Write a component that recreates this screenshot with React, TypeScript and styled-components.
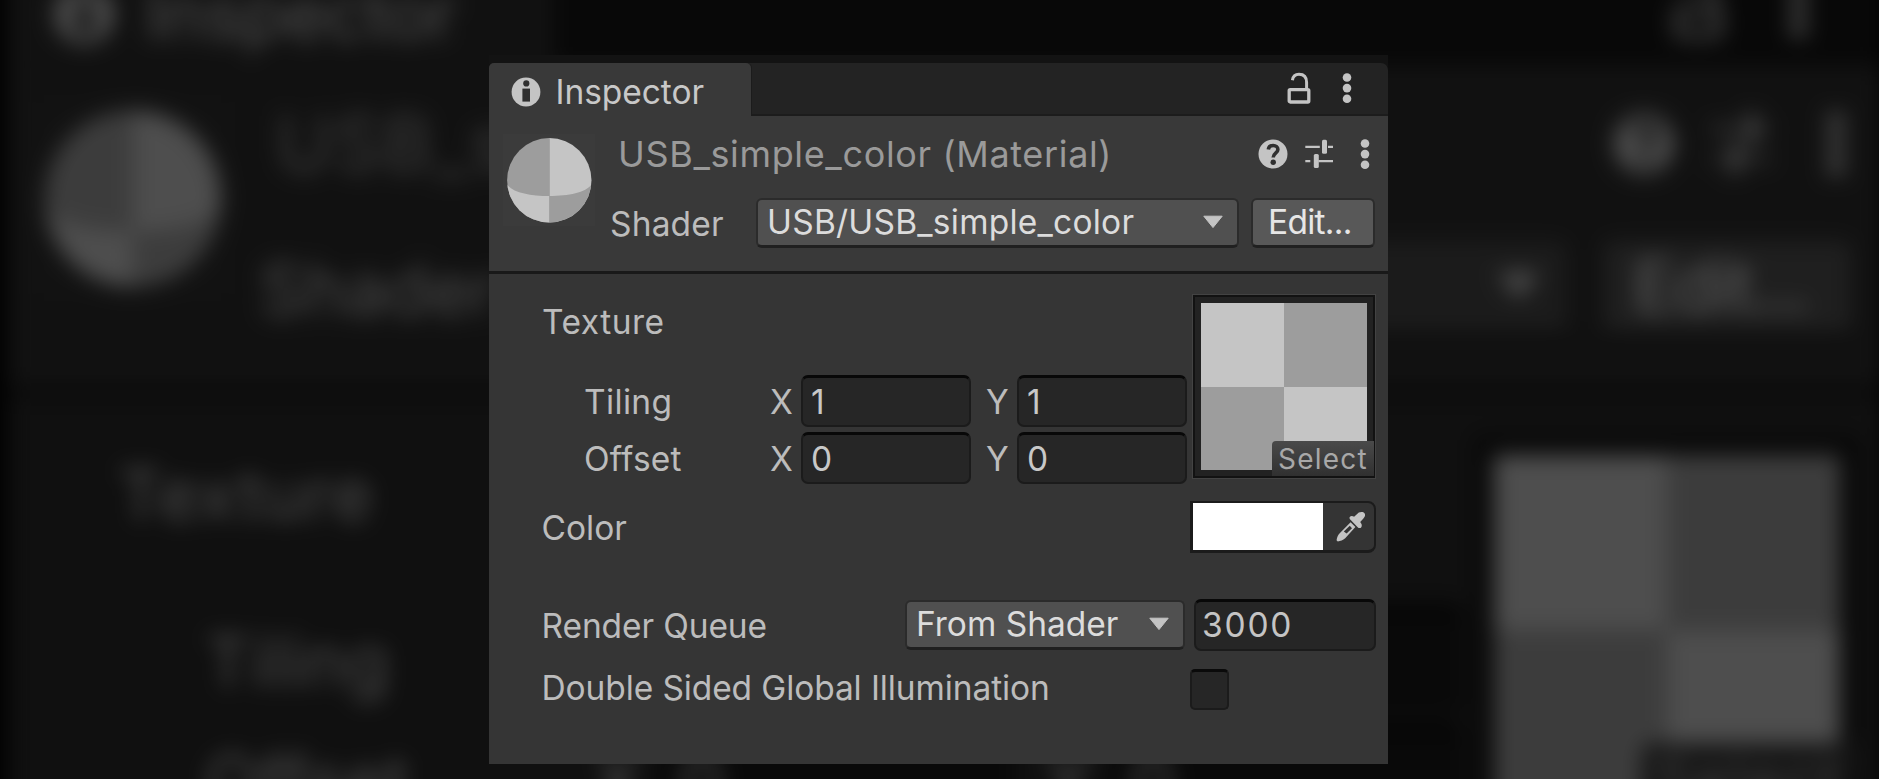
import React from "react";
import styled, { createGlobalStyle } from "styled-components";

const GlobalStyle = createGlobalStyle`
  *, *::before, *::after { box-sizing: border-box; }
  body {
    margin: 0;
    background: #000;
    font-family: Inter, "Liberation Sans", sans-serif;
    overflow: hidden;
  }
  svg { display: block; flex: none; }
`;

const ICON = "#c4c4c4";

const Stage = styled.main`
  position: relative;
  width: 100vw;
  height: 779px;
  padding: 55px 0 0 489px;
  overflow: hidden;
  background: #000;
`;

/* Enlarged, dimmed and blurred copy of the panel behind the real one */
const Backdrop = styled.div`
  position: absolute;
  left: 7px;
  top: -63px;
  transform: scale(2.088);
  transform-origin: 0 0;
  filter: blur(5px) brightness(0.407) contrast(1.055);
  pointer-events: none;
`;

const Panel = styled.section`
  position: relative;
  width: 899px;
  height: 709px;
  padding-top: 8px;
  background: #131313;
`;

const Text = styled.span<{ $spacing?: number; $color?: string; $size?: number }>`
  font-size: ${(p) => p.$size ?? 33.5}px;
  line-height: 40px;
  letter-spacing: ${(p) => p.$spacing ?? 0}px;
  color: ${(p) => p.$color ?? "#bcbcbc"};
  white-space: pre;
`;

const TabBar = styled.header`
  display: flex;
  height: 53px;
  background: #232323;
  border-radius: 5px 7px 0 0;
  box-shadow: inset 0 -2px 0 #1c1c1c;
`;

const Tab = styled.div`
  display: flex;
  align-items: center;
  gap: 14.5px;
  width: 262px;
  padding: 4px 0 0 22px;
  background: #393939;
  border-radius: 5px 5px 0 0;
  box-shadow: 1px 0 0 #1c1c1c;
`;

const TabActions = styled.div`
  display: flex;
  flex: 1;
  justify-content: flex-end;
  align-items: flex-start;
  gap: 31px;
  padding: 9px 36px 0 0;
`;

const Header = styled.div`
  display: flex;
  gap: 15px;
  height: 158px;
  padding: 18px 13px 0 14px;
  background: #393939;
  border-bottom: 3px solid #191919;
`;

const Preview = styled.div`
  width: 92px;
  height: 92px;
  background: #3b3b3b;
`;

const HeaderRows = styled.div`
  display: flex;
  flex: 1;
  flex-direction: column;
  gap: 24px;
`;

const TitleRow = styled.div`
  display: flex;
  align-items: center;
  justify-content: space-between;
  height: 40px;
  padding: 0 5px 0 8px;
`;

const TitleActions = styled.div`
  display: flex;
  align-items: center;
  gap: 17px;
`;

const MenuSlot = styled.div`
  display: flex;
  padding-left: 10px;
`;

const ShaderRow = styled.div`
  display: flex;
  align-items: center;
  height: 50px;
`;

const ShaderLabel = styled.div`
  display: flex;
  width: 146px;
  padding-top: 2px;
`;

const Button = styled.div<{ $width: number; $fill?: string }>`
  display: flex;
  align-items: center;
  justify-content: space-between;
  width: ${(p) => p.$width}px;
  height: 50px;
  padding: 0 13px 1px 9px;
  background: ${(p) => p.$fill ?? "#505050"};
  border: 2px solid #2b2b2b;
  border-bottom: 3px solid #202020;
  border-radius: 6px;
`;

const EditButton = styled(Button)`
  margin-left: 12px;
  padding: 0 0 1px 15px;
`;

const Body = styled.div`
  height: 490px;
  padding: 21px 12px 0 52px;
  background: #353535;
`;

const TextureSection = styled.div`
  display: flex;
  justify-content: space-between;
  height: 189px;
  margin-bottom: 17px;
`;

const TextureFields = styled.div`
  display: flex;
  flex-direction: column;
  gap: 5px;
`;

const TextureLabel = styled.div`
  display: flex;
  align-items: center;
  height: 54px;
  margin-bottom: 21px;
  padding-left: 1px;
`;

const VectorRow = styled.div`
  display: flex;
  align-items: center;
  height: 52px;
`;

const VectorLabel = styled.div`
  display: flex;
  width: 229px;
  padding: 2px 0 0 43px;
`;

const Axis = styled.div`
  display: flex;
  width: 31px;
  padding-top: 2px;
`;

const Field = styled.div<{ $width: number }>`
  display: flex;
  align-items: center;
  width: ${(p) => p.$width}px;
  height: 52px;
  padding-left: 8px;
  background: #262626;
  border: 2px solid #1b1b1b;
  border-top: 3px solid #080808;
  border-radius: 7px;
`;

const VectorField = styled(Field)`
  margin-right: 15px;
  padding-top: 1px;
  &:last-child { margin-right: 0; }
`;

const Thumb = styled.div`
  position: relative;
  width: 182px;
  height: 183px;
  margin-right: 1px;
  padding: 6px;
  background: #222;
  border: 2px solid #121212;
  box-shadow: 0 0 0 1px #434343;
`;

const Checker = styled.div`
  display: grid;
  grid-template: 1fr 1fr / 1fr 1fr;
  width: 166px;
  height: 167px;
`;

const Cell = styled.div<{ $light?: boolean }>`
  background: ${(p) => (p.$light ? "#c5c5c5" : "#9d9d9d")};
`;

const SelectBadge = styled.div`
  position: absolute;
  right: -1px;
  bottom: 0;
  display: flex;
  align-items: center;
  width: 102px;
  height: 35px;
  padding-left: 6px;
  background: linear-gradient(#4a4a4a, #303030);
  border-top-left-radius: 4px;
`;

const PropertyRow = styled.div<{ $height: number; $after?: number }>`
  display: flex;
  align-items: center;
  height: ${(p) => p.$height}px;
  margin-bottom: ${(p) => p.$after ?? 0}px;
`;

const PropertyLabel = styled.div<{ $drop?: number; $lift?: number }>`
  display: flex;
  flex: 1;
  padding: ${(p) => p.$drop ?? 0}px 0 ${(p) => p.$lift ?? 0}px 0.5px;
`;

const ColorField = styled.div`
  display: flex;
  width: 186px;
  height: 52px;
  background: #343434;
  border: solid #1b1b1b;
  border-width: 2px 2px 3px 3px;
  border-radius: 0 8px 8px 0;
`;

const Swatch = styled.div`
  width: 130px;
  height: 47px;
  background: #fff;
`;

const Picker = styled.div`
  display: flex;
  flex: 1;
  align-items: center;
  justify-content: center;
  padding-left: 4px;
`;

const QueueField = styled(Field)`
  height: 52px;
  margin-left: 9px;
  padding: 0 0 2px 6px;
`;

const Checkbox = styled.div`
  width: 39px;
  height: 41px;
  margin-right: 147px;
  background: #262626;
  border: 2px solid #1b1b1b;
  border-top: 3px solid #0a0a0a;
  border-radius: 5px;
`;

const InfoIcon = () => (
  <svg width="30" height="30" viewBox="0 0 30 30">
    <circle cx="15" cy="15" r="14.4" fill={ICON} />
    <circle cx="15.3" cy="6.4" r="3.1" fill="#2f2f2f" />
    <path d="M11.4 11.6h7.6v13h-7.6z" fill="#2f2f2f" />
  </svg>
);

const LockIcon = () => (
  <svg width="24" height="32" viewBox="0 0 24 32">
    <path d="M5.4 8.2C6 4.4 8.6 2.3 12 2.3c5 0 7.6 3.2 7.6 8.2v6" fill="none" stroke={ICON} strokeWidth="3" />
    <rect x="2.2" y="17.6" width="19.6" height="12.4" rx="1" fill="none" stroke={ICON} strokeWidth="3.3" />
  </svg>
);

const KebabIcon = () => (
  <svg width="10" height="32" viewBox="0 0 10 32">
    {[5.5, 16.1, 26.7].map((y) => (
      <circle key={y} cx="5" cy={y} r="4.3" fill={ICON} />
    ))}
  </svg>
);

const HelpIcon = () => (
  <svg width="30" height="30" viewBox="0 0 30 30">
    <circle cx="15" cy="15" r="14.5" fill={ICON} />
    <path d="M10.3 10.4c.4-2.6 2.3-3.9 4.8-3.9 2.8 0 4.8 1.6 4.8 4 0 3.8-4.7 3.7-4.7 8" fill="none" stroke="#303030" strokeWidth="3.6" />
    <circle cx="15.2" cy="23.2" r="2.7" fill="#303030" />
  </svg>
);

const SlidersIcon = () => (
  <svg width="28" height="30" viewBox="0 0 28 30">
    <path d="M.3 7.9h14.5M23 7.9h5M.3 22.2h5M13.5 22.2H28" stroke={ICON} strokeWidth="2.2" />
    <rect x="17" y=".8" width="5" height="14" rx="1.5" fill={ICON} />
    <rect x="8.8" y="15" width="5" height="14" rx="1.5" fill={ICON} />
  </svg>
);

const Caret = () => (
  <svg width="22" height="14" viewBox="0 0 22 14">
    <path d="M1.8 1.2h18.4L11 12.6z" fill={ICON} stroke={ICON} strokeWidth="1" strokeLinejoin="round" />
  </svg>
);

const EyedropperIcon = () => (
  <svg width="30" height="32" viewBox="0 0 30 32">
    <path
      d="M13.6 6.2c1-1.5 2.7-1.7 4.5-.5l4.7-4.2C25 .6 28.5.8 29 3.2c.4 2-.8 3.3-1.8 4.5l-3 3.4c1.6 1.8 2.3 3.9.8 5.6-1.3.7-2.4.4-3.3-.5l-7.2-7.4c-.8-.8-1.2-1.7-.9-2.6z"
      fill={ICON}
    />
    <path d="M14.6 11.2l4.8 4.8L9.2 27.2c-2.2 1.8-4.8 3-7.4 3.2-.8-.2-1.1-.6-1.2-1.3.4-3 1.5-5.3 3.6-7.4z" fill={ICON} />
    <path d="M13.8 14.8l2.2 2.4-5.4 5.4-2.8-2.2z" fill="#343434" />
  </svg>
);

const BallIcon = () => (
  <svg width="92" height="92" viewBox="0 0 92 92">
    <defs>
      <clipPath id="ball">
        <circle cx="46.3" cy="46.3" r="42.2" />
      </clipPath>
    </defs>
    <g clipPath="url(#ball)">
      <rect width="46.3" height="92" fill="#9d9d9d" />
      <rect x="46.3" width="46" height="92" fill="#c5c5c5" />
      <path d="M4 50.5C10 58.5 27 62 46.3 62v30H4z" fill="#c5c5c5" />
      <path d="M88.6 50.5C82.6 58.5 65.6 62 46.3 62v30h42.3z" fill="#9d9d9d" />
    </g>
  </svg>
);

const vectors = [
  { label: "Tiling", spacing: 0.35, value: "1" },
  { label: "Offset", spacing: 0.19, value: "0" },
];

function VectorPair({ value }: { value: string }) {
  return (
    <>
      {["X", "Y"].map((axis) => (
        <React.Fragment key={axis}>
          <Axis>
            <Text>{axis}</Text>
          </Axis>
          <VectorField $width={170}>
            <Text $color="#c8c8c8">{value}</Text>
          </VectorField>
        </React.Fragment>
      ))}
    </>
  );
}

function Inspector() {
  return (
    <Panel>
      <TabBar>
        <Tab>
          <InfoIcon />
          <Text $spacing={-0.05} $color="#c8c8c8">Inspector</Text>
        </Tab>
        <TabActions>
          <LockIcon />
          <KebabIcon />
        </TabActions>
      </TabBar>

      <Header>
        <Preview>
          <BallIcon />
        </Preview>
        <HeaderRows>
          <TitleRow>
            <Text $size={36} $spacing={0.65} $color="#9a9a9a">USB_simple_color (Material)</Text>
            <TitleActions>
              <HelpIcon />
              <SlidersIcon />
              <MenuSlot>
                <KebabIcon />
              </MenuSlot>
            </TitleActions>
          </TitleRow>
          <ShaderRow>
            <ShaderLabel>
              <Text $spacing={0.17}>Shader</Text>
            </ShaderLabel>
            <Button $width={483}>
              <Text $spacing={0.23} $color="#dcdcdc">USB/USB_simple_color</Text>
              <Caret />
            </Button>
            <EditButton $width={124} $fill="#585858">
              <Text $spacing={-0.72} $color="#e6e6e6">Edit...</Text>
            </EditButton>
          </ShaderRow>
        </HeaderRows>
      </Header>

      <Body>
        <TextureSection>
          <TextureFields>
            <TextureLabel>
              <Text $spacing={0.49}>Texture</Text>
            </TextureLabel>
            {vectors.map((v) => (
              <VectorRow key={v.label}>
                <VectorLabel>
                  <Text $spacing={v.spacing}>{v.label}</Text>
                </VectorLabel>
                <VectorPair value={v.value} />
              </VectorRow>
            ))}
          </TextureFields>
          <Thumb>
            <Checker>
              <Cell $light />
              <Cell />
              <Cell />
              <Cell $light />
            </Checker>
            <SelectBadge>
              <Text $size={28} $spacing={1.22} $color="#a8a8a8">Select</Text>
            </SelectBadge>
          </Thumb>
        </TextureSection>

        <PropertyRow $height={52} $after={46}>
          <PropertyLabel $drop={2}>
            <Text>Color</Text>
          </PropertyLabel>
          <ColorField>
            <Swatch />
            <Picker>
              <EyedropperIcon />
            </Picker>
          </ColorField>
        </PropertyRow>

        <PropertyRow $height={52} $after={18}>
          <PropertyLabel $drop={2}>
            <Text $spacing={-0.11}>Render Queue</Text>
          </PropertyLabel>
          <Button $width={280}>
            <Text $color="#dcdcdc">From Shader</Text>
            <Caret />
          </Button>
          <QueueField $width={182}>
            <Text $spacing={1.8} $color="#c4c4c4">3000</Text>
          </QueueField>
        </PropertyRow>

        <PropertyRow $height={41}>
          <PropertyLabel $lift={3}>
            <Text $spacing={-0.11}>Double Sided Global Illumination</Text>
          </PropertyLabel>
          <Checkbox />
        </PropertyRow>
      </Body>
    </Panel>
  );
}

export default function App() {
  return (
    <>
      <GlobalStyle />
      <Stage>
        <Backdrop aria-hidden="true">
          <Inspector />
        </Backdrop>
        <Inspector />
      </Stage>
    </>
  );
}
